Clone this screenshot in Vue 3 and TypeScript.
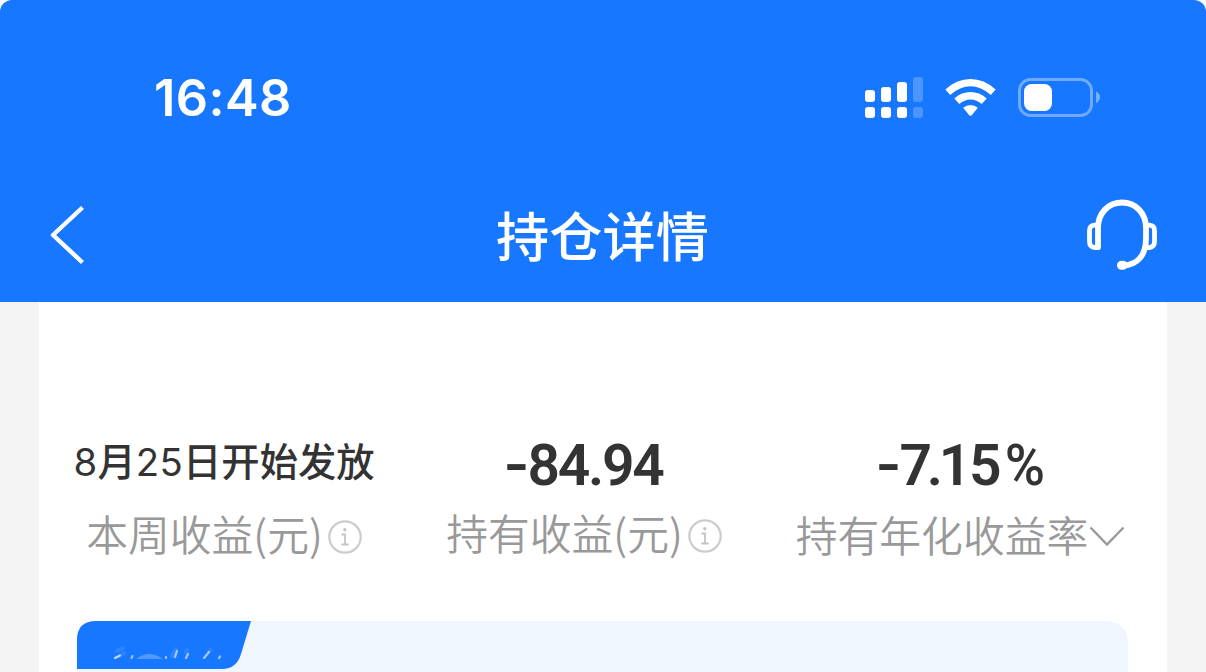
<script setup lang="ts">
interface Part {
  text: string
  kind: string
}

interface Metric {
  key: string
  parts: Part[]
  label: string
  icon: 'info' | 'arrow'
}

const metrics: Metric[] = [
  {
    key: 'week',
    parts: [
      { text: '8', kind: 'digit' },
      { text: '月', kind: 'word' },
      { text: '25', kind: 'digit' },
      { text: '日开始发放', kind: 'word' },
    ],
    label: '本周收益(元)',
    icon: 'info',
  },
  {
    key: 'hold',
    parts: [
      { text: '-', kind: 'minus' },
      { text: '84.94', kind: 'number' },
    ],
    label: '持有收益(元)',
    icon: 'info',
  },
  {
    key: 'rate',
    parts: [
      { text: '-', kind: 'minus' },
      { text: '7', kind: 'seven' },
      { text: '.', kind: 'point' },
      { text: '15', kind: 'number' },
      { text: '%', kind: 'percent' },
    ],
    label: '持有年化收益率',
    icon: 'arrow',
  },
]
</script>

<template>
  <div class="screen">
    <header class="header">
      <div class="status">
        <span class="time">16:48</span>
        <svg class="indicators" width="240" height="44" viewBox="0 0 240 44">
          <g fill="#fff">
            <rect x="5" y="15" width="10" height="12" rx="3" />
            <rect x="21" y="12" width="10" height="15" rx="3" />
            <rect x="37" y="7" width="10" height="20" rx="3" />
            <rect x="5" y="32" width="10" height="11" rx="3" />
            <rect x="21" y="32" width="10" height="11" rx="3" />
            <rect x="37" y="32" width="10" height="11" rx="3" />
            <g opacity=".22">
              <rect x="53" y="2" width="10" height="25" rx="3" />
              <rect x="53" y="32" width="10" height="11" rx="3" />
            </g>
          </g>
          <g fill="#fff">
            <path d="M85.4 14.4Q97 4 110.5 4T135.6 14.4L130.8 20Q121 11.3 110.5 11.3T90.2 20Z" />
            <path d="M94.3 23.4Q101.6 17 110.5 17T126.7 23.4L121.7 29Q116.5 24.4 110.5 24.4T99.3 29Z" />
            <path d="M103.2 32.8Q106.5 30 110.5 30T117.8 32.8L111.5 40.4Q110.5 41.3 109.5 40.4Z" />
          </g>
          <rect x="159.5" y="4.5" width="72" height="36" rx="11" fill="none" stroke="#fff" stroke-opacity=".38" stroke-width="3" />
          <rect x="164" y="9" width="28" height="27" rx="7.5" fill="#fff" />
          <path d="M236 16.5Q240 18.5 240 22T236 28.5Z" fill="#fff" opacity=".42" />
        </svg>
      </div>
      <nav class="nav">
        <svg class="back" width="40" height="64" viewBox="0 0 40 64">
          <path d="M36.5 4.5L7 32L36.5 59.5" fill="none" stroke="#fff" stroke-width="4.4" stroke-linejoin="round" />
        </svg>
        <h1 class="title">持仓详情</h1>
        <svg class="service" width="76" height="76" viewBox="0 0 76 76" fill="none" stroke="#fff" stroke-width="5.8" stroke-linecap="round" stroke-linejoin="round">
          <path d="M14 51V32C14 17 24.5 6.5 38 6.5S62 17 62 32V42C62 59 54 69 38.5 69.8" />
          <path d="M14 29.200H10.500Q5.500 29.500 5.500 34.500V45.500Q5.500 51 10.500 51.500H14" stroke-width="4.800" />
          <path d="M62 29.200H65.500Q70.500 29.500 70.500 34.500V45.500Q70.500 51 65.500 51.500H62" stroke-width="4.800" />
          <path d="M37.500 69.300H39" stroke-width="9" />
        </svg>
      </nav>
    </header>

    <main class="sheet">
      <section class="metrics">
        <div v-for="m in metrics" :key="m.key" class="metric" :class="m.key">
          <div class="value"><span v-for="(p, i) in m.parts" :key="i" :class="p.kind">{{ p.text }}</span></div>
          <div class="label">
            <span>{{ m.label }}</span>
            <svg v-if="m.icon === 'info'" class="info" width="34" height="34" viewBox="0 0 34 34">
              <circle cx="17" cy="17" r="15.700" fill="none" stroke="#ccc" stroke-width="2.200" />
              <circle cx="16.800" cy="9.800" r="1.700" fill="#c4c4c4" />
              <path d="M13.500 14.500H17V24.500M13.300 24.500H20.700" fill="none" stroke="#c4c4c4" stroke-width="1.800" />
            </svg>
            <svg v-else class="arrow" width="38" height="24" viewBox="0 0 38 24">
              <path d="M2.500 3.500L19 20.500L35.500 3.500" fill="none" stroke="#999" stroke-width="2.400" />
            </svg>
          </div>
        </div>
      </section>

      <section class="panel">
        <svg class="ribbon" width="174" height="48" viewBox="0 0 174 48">
          <path d="M0 48V19Q0 0 19 0H174L164 33Q159.500 48 145 48Z" fill="#1777ff" />
          <g fill="none" stroke="#fff" stroke-linecap="round">
            <path d="M38 37L43 34.500" stroke-width="2" opacity=".75" />
            <path d="M40 30L46 27M47 32L44 34" stroke-width="4" opacity=".1" />
            <path d="M54.500 37L55.500 35" stroke-width="2" opacity=".6" />
          </g>
          <path d="M59 38Q72 28 86 38Z" fill="#fff" opacity=".25" />
          <g fill="none" stroke="#fff" stroke-linecap="round">
            <path d="M89 37V36M98 36L100 30M109 37L111 33" stroke-width="2.200" opacity=".6" />
            <path d="M127 37L132 31M142 37L143 35.500" stroke-width="2.200" opacity=".6" />
            <path d="M95 35L99 28M109 31L110 29M132 30L134 29" stroke-width="4" opacity=".1" />
          </g>
        </svg>
      </section>
    </main>
  </div>
</template>

<style>
body {
  background: #fff;
}
</style>

<style scoped>
.screen {
  width: 1206px;
  height: 672px;
  overflow: hidden;
  display: flex;
  flex-direction: column;
  border-radius: 12px 12px 0 0;
  background: #f4f4f4;
  font-family: "Noto Sans CJK SC", sans-serif;
}
.header {
  flex: none;
  height: 302px;
  box-sizing: border-box;
  padding-top: 71px;
  background: #1777ff;
  color: #fff;
}
.status {
  height: 52px;
  padding: 0 106px 0 154px;
  display: flex;
  justify-content: space-between;
  align-items: center;
}
.time {
  padding-top: 2px;
  font: 600 50.5px/52px Inter, sans-serif;
  letter-spacing: 0.4px;
}
.indicators {
  display: block;
}
.nav {
  height: 76px;
  margin-top: 73px;
  padding: 0 46px;
  display: grid;
  grid-template-columns: 76px 1fr 76px;
  align-items: center;
}
.back {
  padding-top: 1px;
}
.title {
  margin: 0;
  padding: 0 1px 1px 0;
  text-align: center;
  font-size: 53.2px;
  line-height: 75px;
  font-weight: 500;
}
.sheet {
  flex: 1;
  width: 1128px;
  margin-left: 39px;
  box-sizing: border-box;
  padding: 133px 39px 0 38px;
  display: flex;
  flex-direction: column;
  background: #fff;
}
.metrics {
  flex: none;
  height: 186px;
  margin: 0 -39px 0 -38px;
  display: grid;
  grid-template-columns: 370px 350px 404px;
}
.metric {
  display: flex;
  flex-direction: column;
  align-items: center;
  white-space: nowrap;
}
.value {
  height: 60px;
  line-height: 62px;
  color: #333;
  font-family: Roboto, sans-serif;
  font-weight: 600;
  font-size: 57px;
}
.number {
  letter-spacing: -2.3px;
}
.minus {
  display: inline-block;
  margin-right: 1px;
  transform: scaleX(1.2);
}
.seven {
  letter-spacing: -5.5px;
}
.point {
  letter-spacing: -4px;
}
.percent {
  display: inline-block;
  width: 40px;
  margin-left: 5px;
  font-weight: 500;
  transform: scaleX(0.96);
}
.week .value {
  font-size: 38.3px;
  line-height: 50px;
}
.digit {
  font-family: Inter, sans-serif;
  font-weight: 400;
  letter-spacing: 0.3px;
}
.word {
  font-family: "Noto Sans CJK SC", sans-serif;
  font-weight: 500;
}
.label {
  height: 60px;
  margin-top: 8px;
  display: flex;
  align-items: center;
  color: #999;
  font-size: 41.8px;
  line-height: 60px;
  font-weight: 350;
}
.hold .label {
  margin-top: 7px;
}
.rate .label {
  margin-top: 9px;
}
.info {
  margin: 7px 0 0 5px;
}
.arrow {
  margin-top: 4px;
}
.panel {
  flex: 1;
  border-radius: 20px 20px 0 0;
  background: #eff6ff;
}
.ribbon {
  display: block;
}
</style>
